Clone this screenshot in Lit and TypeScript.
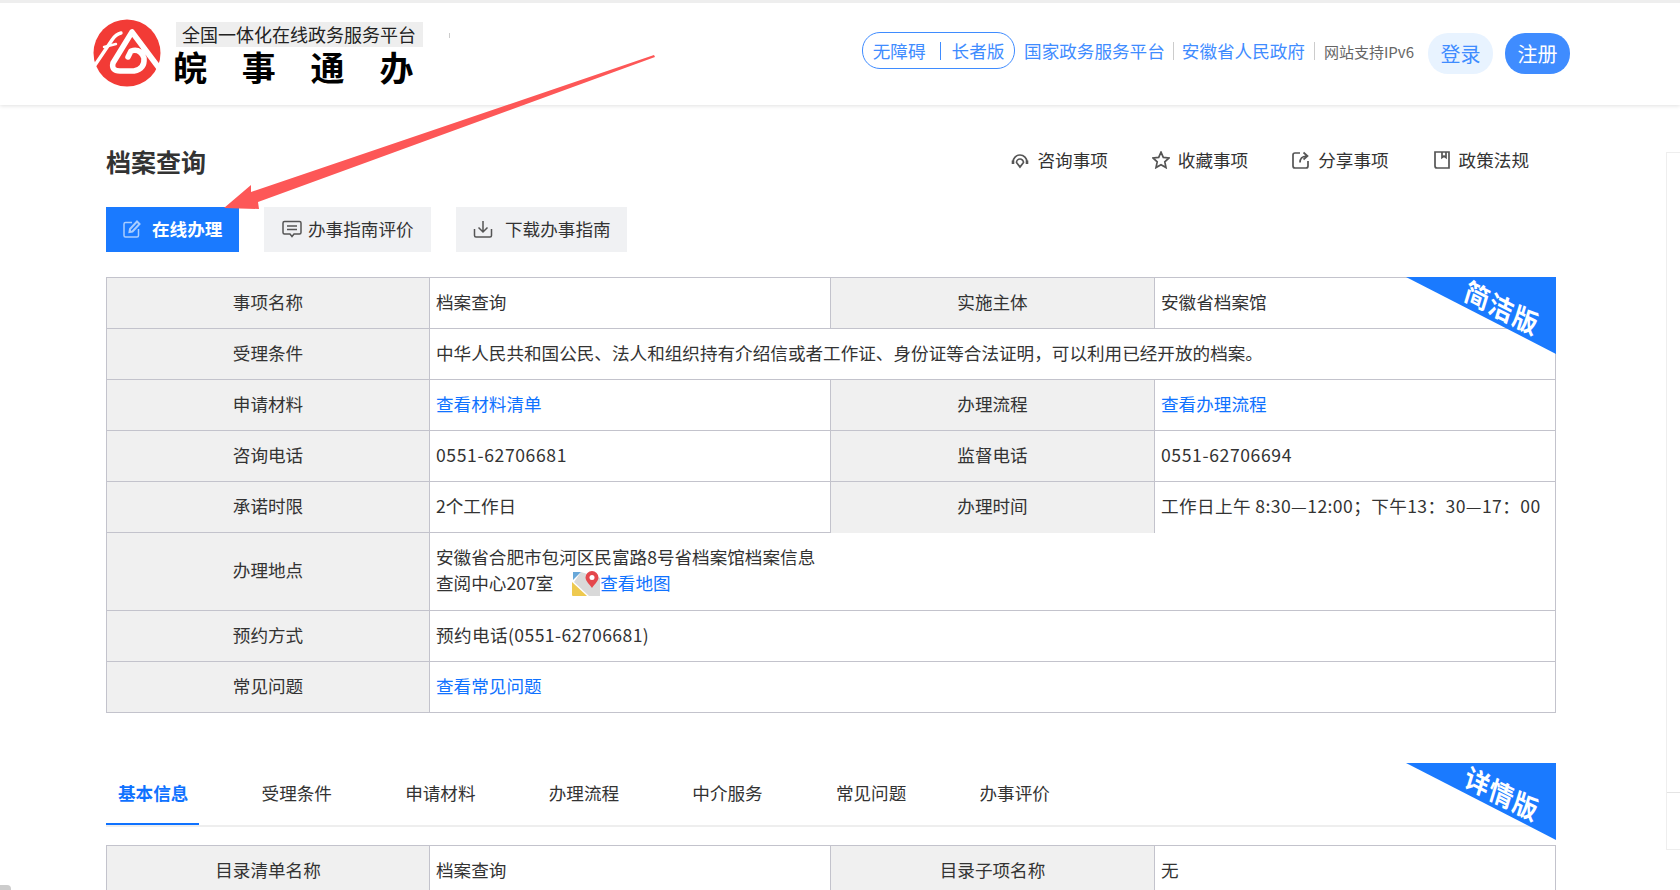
import { LitElement, css, html, svg } from 'lit'
import { customElement } from 'lit/decorators.js'

type Cell = { text: string, kind?: 'label' | 'link', span?: boolean, open?: boolean, num?: 'wide' | 'phone' }

const briefCells: Cell[] = [
  { text: '事项名称', kind: 'label' },
  { text: '档案查询' },
  { text: '实施主体', kind: 'label' },
  { text: '安徽省档案馆' },
  { text: '受理条件', kind: 'label' },
  { text: '中华人民共和国公民、法人和组织持有介绍信或者工作证、身份证等合法证明，可以利用已经开放的档案。', span: true },
  { text: '申请材料', kind: 'label' },
  { text: '查看材料清单', kind: 'link' },
  { text: '办理流程', kind: 'label' },
  { text: '查看办理流程', kind: 'link' },
  { text: '咨询电话', kind: 'label' },
  { text: '0551-62706681', num: 'phone' },
  { text: '监督电话', kind: 'label' },
  { text: '0551-62706694', num: 'phone' },
  { text: '承诺时限', kind: 'label' },
  { text: '2个工作日' },
  { text: '办理时间', kind: 'label', open: true },
  { text: '工作日上午 8:30—12:00；下午13：30—17：00', open: true, num: 'wide' },
]

const tailCells: Cell[] = [
  { text: '预约方式', kind: 'label' },
  { text: '预约电话(0551-62706681)', span: true, num: 'wide' },
  { text: '常见问题', kind: 'label' },
  { text: '查看常见问题', kind: 'link', span: true },
]

const detailCells: Cell[] = [
  { text: '目录清单名称', kind: 'label' },
  { text: '档案查询' },
  { text: '目录子项名称', kind: 'label' },
  { text: '无' },
]

const tabs = ['基本信息', '受理条件', '申请材料', '办理流程', '中介服务', '常见问题', '办事评价']

const consultIcon = svg`<path d="M2 11 A7 7 0 0 1 16 11" /><path d="M5.500 11.500 A3.500 3.500 0 0 1 12.500 11.500 L9 16 Z" /><path d="M2 9.500 L2 13 M16 9.500 L16 13" stroke-width="2.600" />`
const starIcon = svg`<path d="M9 1.200 L11.300 6.400 L17 7 L12.800 10.800 L14 16.600 L9 13.700 L4 16.600 L5.200 10.800 L1 7 L6.700 6.400 Z" />`
const shareIcon = svg`<path d="M8 2 H3 Q1 2 1 4 V15 Q1 17 3 17 H14 Q16 17 16 15 V10" /><path d="M8 11.500 Q8 5.500 14.500 5 M11.500 1.500 L15.500 5 L11.500 8.500" />`
const bookIcon = svg`<path d="M2 1 H16 V17 H4 Q2 17 2 15 Z" /><path d="M9 1 V6.500 L11 5 L13 6.500 V1" />`

@customElement('app-root')
export class AppRoot extends LitElement {

  renderCell(cell: Cell) {
    const classes = [
      'cell',
      cell.kind ?? '',
      cell.span ? 'span' : '',
      cell.open ? 'open' : '',
      cell.num ?? '',
    ].join(' ')
    return html`<div class=${classes}>${cell.text}</div>`
  }

  renderAction(label: string, icon: unknown) {
    return html`
      <span class="action">
        <svg class="action-icon" viewBox="0 0 18 18">${icon}</svg>
        ${label}
      </span>
    `
  }

  render() {
    return html`
      <header class="header">
        <div class="brand">
          <svg class="logo" viewBox="0 0 80 78">
            <circle cx="40" cy="39" r="33.500" fill="#f23b36" />
            <g fill="none" stroke="#fff" stroke-linecap="round" stroke-linejoin="round">
              <path stroke-width="5.500" d="M72 54 L45 18 L26 49 Q24 57 33 57 L47 57 Q58 55 57 44 Q53 34 44 37 L41 43" />
              <path stroke-width="3.400" d="M6 54 L25 26 Q29 20 34 19" />
              <path stroke-width="2.400" d="M17 33 L29 30" />
            </g>
          </svg>
          <div class="brand-text">
            <div class="brand-tag">全国一体化在线政务服务平台</div>
            <div class="brand-name">皖事通办</div>
          </div>
          <span class="brand-mark"></span>
        </div>
        <nav class="top-nav">
          <div class="access"><span>无障碍</span><i></i><span>长者版</span></div>
          <span class="top-link">国家政务服务平台</span>
          <i class="top-sep first"></i>
          <span class="top-link">安徽省人民政府</span>
          <i class="top-sep"></i>
          <span class="ipv6">网站支持IPv6</span>
          <span class="login">登录</span>
          <span class="register">注册</span>
        </nav>
      </header>

      <main class="main">
        <div class="title-row">
          <h1 class="title">档案查询</h1>
          <div class="actions">
            ${this.renderAction('咨询事项', consultIcon)}
            ${this.renderAction('收藏事项', starIcon)}
            ${this.renderAction('分享事项', shareIcon)}
            ${this.renderAction('政策法规', bookIcon)}
          </div>
        </div>

        <div class="buttons">
          <span class="btn btn-primary">
            <svg class="btn-icon" viewBox="0 0 18 18">
              <path d="M9 2.500 H2.500 Q1 2.500 1 4 V15.500 Q1 17 2.500 17 H14 Q15.500 17 15.500 15.500 V9" />
              <path stroke-width="2" d="M6.500 12 L7 9 L14 1.500 L16.500 4 L9.500 11.500 Z" />
            </svg>
            在线办理
          </span>
          <span class="btn btn-eval">
            <svg class="btn-icon-lg" viewBox="0 0 20 18">
              <path d="M2.500 1.500 H17.500 Q19 1.500 19 3 V12.500 Q19 14 17.500 14 H12 L10 16.500 L8 14 H2.500 Q1 14 1 12.500 V3 Q1 1.500 2.500 1.500 Z" />
              <path d="M5 6 H15 M5 9.500 H15" />
            </svg>
            办事指南评价
          </span>
          <span class="btn btn-download">
            <svg class="btn-icon-lg" viewBox="0 0 20 18">
              <path d="M1.500 9 V15.500 Q1.500 17 3 17 H17 Q18.500 17 18.500 15.500 V9" />
              <path d="M10 1 V12 M5.500 7.500 L10 12 L14.500 7.500" />
            </svg>
            下载办事指南
          </span>
        </div>

        <section class="sheet">
          <div class="grid brief">
            ${briefCells.map((c) => this.renderCell(c))}
            <div class="cell label">办理地点</div>
            <div class="cell span">
              <div class="address-text">安徽省合肥市包河区民富路8号省档案馆档案信息<br />查阅中心207室<svg class="map-icon" viewBox="0 0 28 25">
                  <path fill="#d9d9d9" d="M9 1 L28 7 V25 H17 L2 11 Z" />
                  <path fill="#68a7d8" d="M1 1 H9 L1 9 Z" />
                  <path fill="#eec94f" d="M0 11 L15 25 H1 Q0 25 0 24 Z" />
                  <path fill="#e4474c" d="M20 0 A6.500 6.500 0 0 1 26.500 6.500 C26.500 10 22 14 20 17 C18 14 13.500 10 13.500 6.500 A6.500 6.500 0 0 1 20 0 Z" />
                  <circle cx="20" cy="6.500" r="2.500" fill="#fff" />
                </svg><span class="link-text">查看地图</span></div>
            </div>
            ${tailCells.map((c) => this.renderCell(c))}
          </div>
          <div class="ribbon"><span>简洁版</span></div>
        </section>

        <section class="sheet detail">
          <div class="tabs">
            ${tabs.map((t, i) => html`<span class="tab ${i === 0 ? 'active' : ''}">${t}</span>`)}
          </div>
          <div class="grid">
            ${detailCells.map((c) => this.renderCell(c))}
          </div>
          <div class="ribbon"><span>详情版</span></div>
        </section>
      </main>

      <div class="side-panel"><div></div><div></div></div>
      <div class="corner"></div>

      <svg class="arrow" viewBox="0 0 1680 890">
        <polygon points="654,55 251,192 251,185 224,208 259,209 258,202 655,57" fill="#fd5757" />
      </svg>
    `
  }

  static styles = css`
    :host {
      display: block;
      position: relative;
      width: 1680px;
      height: 890px;
      overflow: hidden;
      background: #fff;
      color: #333;
      font-family: "Noto Sans CJK SC", "Liberation Sans", sans-serif;
      font-size: 17.6px;
    }
    i {
      display: block;
    }

    .header {
      box-sizing: border-box;
      height: 105px;
      border-top: 3px solid #eee;
      box-shadow: 0 1px 4px rgba(0, 0, 0, 0.12);
      padding: 0 110px 0 93px;
      display: flex;
      justify-content: space-between;
    }
    .brand {
      display: flex;
      gap: 17px;
      position: relative;
    }
    .logo {
      width: 80px;
      height: 78px;
      margin: 11px -8px 0 -6px;
    }
    .brand-text {
      padding-top: 19px;
    }
    .brand-tag {
      width: 247px;
      height: 25px;
      box-sizing: border-box;
      padding-left: 6px;
      background: #eee;
      color: #222;
      font-size: 18px;
      line-height: 25px;
      white-space: nowrap;
    }
    .brand-name {
      width: 260px;
      margin-left: -3px;
      font-size: 34px;
      font-weight: 700;
      line-height: 40px;
      letter-spacing: 34.8px;
      color: #000;
      white-space: nowrap;
    }
    .brand-mark {
      position: absolute;
      left: 356px;
      top: 30px;
      width: 1px;
      height: 5px;
      background: #ccc;
    }

    .top-nav {
      display: flex;
      align-items: flex-start;
      padding-top: 29px;
      color: #3f8cff;
    }
    .access {
      box-sizing: border-box;
      width: 153px;
      height: 37px;
      border: 1px solid #3f8cff;
      border-radius: 18px;
      display: flex;
      align-items: center;
      justify-content: center;
      gap: 14px;
      margin-right: 9px;
    }
    .access i {
      width: 1px;
      height: 18px;
      margin-right: -3px;
      background: #3f8cff;
    }
    .top-link {
      line-height: 37px;
      white-space: nowrap;
    }
    .top-sep {
      width: 1px;
      height: 18px;
      margin: 10px 9px 0;
      background: #ccc;
    }
    .top-sep.first {
      margin: 10px 8px 0;
    }
    .ipv6 {
      color: #666;
      font-size: 15px;
      line-height: 39px;
      white-space: nowrap;
      margin-right: 14px;
    }
    .login, .register {
      width: 65px;
      height: 41px;
      margin-top: 1px;
      border-radius: 20px;
      font-size: 20px;
      line-height: 41px;
      text-align: center;
    }
    .login {
      background: #e8f3ff;
      margin-right: 12px;
    }
    .register {
      background: #3f8cff;
      color: #fff;
    }

    .main {
      width: 1450px;
      margin-left: 106px;
    }
    .title-row {
      display: flex;
      justify-content: space-between;
      align-items: center;
      padding: 32px 27px 0 0;
      height: 50px;
    }
    .title {
      margin: 0 0 2px;
      font-size: 25px;
      font-weight: 700;
      line-height: 50px;
      color: #333;
    }
    .actions {
      display: flex;
      gap: 44px;
      margin-top: -4px;
    }
    .action {
      display: flex;
      align-items: center;
      gap: 8px;
      line-height: 26px;
    }
    .action-icon {
      width: 18px;
      height: 18px;
      fill: none;
      stroke: #555;
      stroke-width: 1.7;
    }

    .buttons {
      display: flex;
      gap: 25px;
      margin-top: 20px;
    }
    .btn {
      box-sizing: border-box;
      height: 45px;
      padding-bottom: 2px;
      display: flex;
      align-items: center;
      background: #f0f1f3;
      white-space: nowrap;
    }
    .btn-primary {
      width: 133px;
      padding-left: 17px;
      gap: 11px;
      background: #1a7aff;
      color: #fff;
      font-weight: 700;
    }
    .btn-eval {
      width: 167px;
      padding-left: 18px;
      gap: 6px;
    }
    .btn-download {
      width: 171px;
      padding-left: 17px;
      gap: 12px;
    }
    .btn-icon {
      width: 18px;
      height: 18px;
      fill: none;
      stroke: #a9cdff;
      stroke-width: 1.5;
    }
    .btn-icon-lg {
      width: 20px;
      height: 18px;
      fill: none;
      stroke: #555;
      stroke-width: 1.5;
    }

    .sheet {
      position: relative;
      margin-top: 25px;
    }
    .grid {
      display: grid;
      grid-template-columns: 323px 401px 324px 401px;
      grid-auto-rows: 51px;
      border-top: 1px solid #c3c3cc;
      border-left: 1px solid #c3c3cc;
    }
    .brief {
      grid-template-rows: repeat(5, 51px) 78px repeat(2, 51px);
    }
    .cell {
      box-sizing: border-box;
      display: flex;
      align-items: center;
      padding: 0 0 4px 6px;
      border-right: 1px solid #c3c3cc;
      border-bottom: 1px solid #c3c3cc;
      white-space: nowrap;
    }
    .label {
      justify-content: center;
      padding-left: 0;
      background: #f0f0f0;
    }
    .link, .link-text {
      color: #0f72ff;
    }
    .span {
      grid-column: span 3;
    }
    .open {
      border-bottom: none;
    }
    .wide {
      letter-spacing: 0.4px;
    }
    .phone {
      letter-spacing: 0.6px;
    }
    .address-text {
      line-height: 26px;
    }
    .map-icon {
      width: 28px;
      height: 25px;
      margin-left: 19px;
      vertical-align: -6px;
    }

    .ribbon {
      position: absolute;
      top: 0;
      right: 0;
      width: 150px;
      height: 77px;
      background: #1a7aff;
      clip-path: polygon(0 0, 100% 0, 100% 100%);
    }
    .ribbon span {
      position: absolute;
      left: 96px;
      top: 30px;
      color: #fff;
      font-size: 26px;
      font-weight: 700;
      line-height: 30px;
      letter-spacing: 1px;
      white-space: nowrap;
      transform: translate(-50%, -50%) rotate(27deg) skewX(10deg);
    }

    .detail {
      margin-top: 50px;
    }
    .tabs {
      display: flex;
      height: 62px;
      margin-bottom: 18px;
      border-bottom: 2px solid #eee;
    }
    .tab {
      box-sizing: border-box;
      height: 62px;
      padding: 0 10.6px 0 12px;
      margin-right: 50.6px;
      line-height: 60px;
      white-space: nowrap;
    }
    .tab.active {
      color: #0f72ff;
      font-weight: 700;
      border-bottom: 2px solid #0f72ff;
    }

    .side-panel {
      position: absolute;
      left: 1666px;
      top: 152px;
      width: 14px;
      height: 698px;
      box-sizing: border-box;
      border: 1px solid #eee;
      border-right: none;
    }
    .side-panel div:first-child {
      height: 639px;
      border-bottom: 1px solid #e4e4e4;
    }
    .corner {
      position: absolute;
      left: 0;
      bottom: 0;
      width: 11px;
      height: 5px;
      background: #ccc;
      border-top-right-radius: 4px;
    }
    .arrow {
      position: absolute;
      left: 0;
      top: 0;
      width: 1680px;
      height: 890px;
      pointer-events: none;
    }
  `;
}

declare global {
  interface HTMLElementTagNameMap {
    'app-root': AppRoot
  }
}
